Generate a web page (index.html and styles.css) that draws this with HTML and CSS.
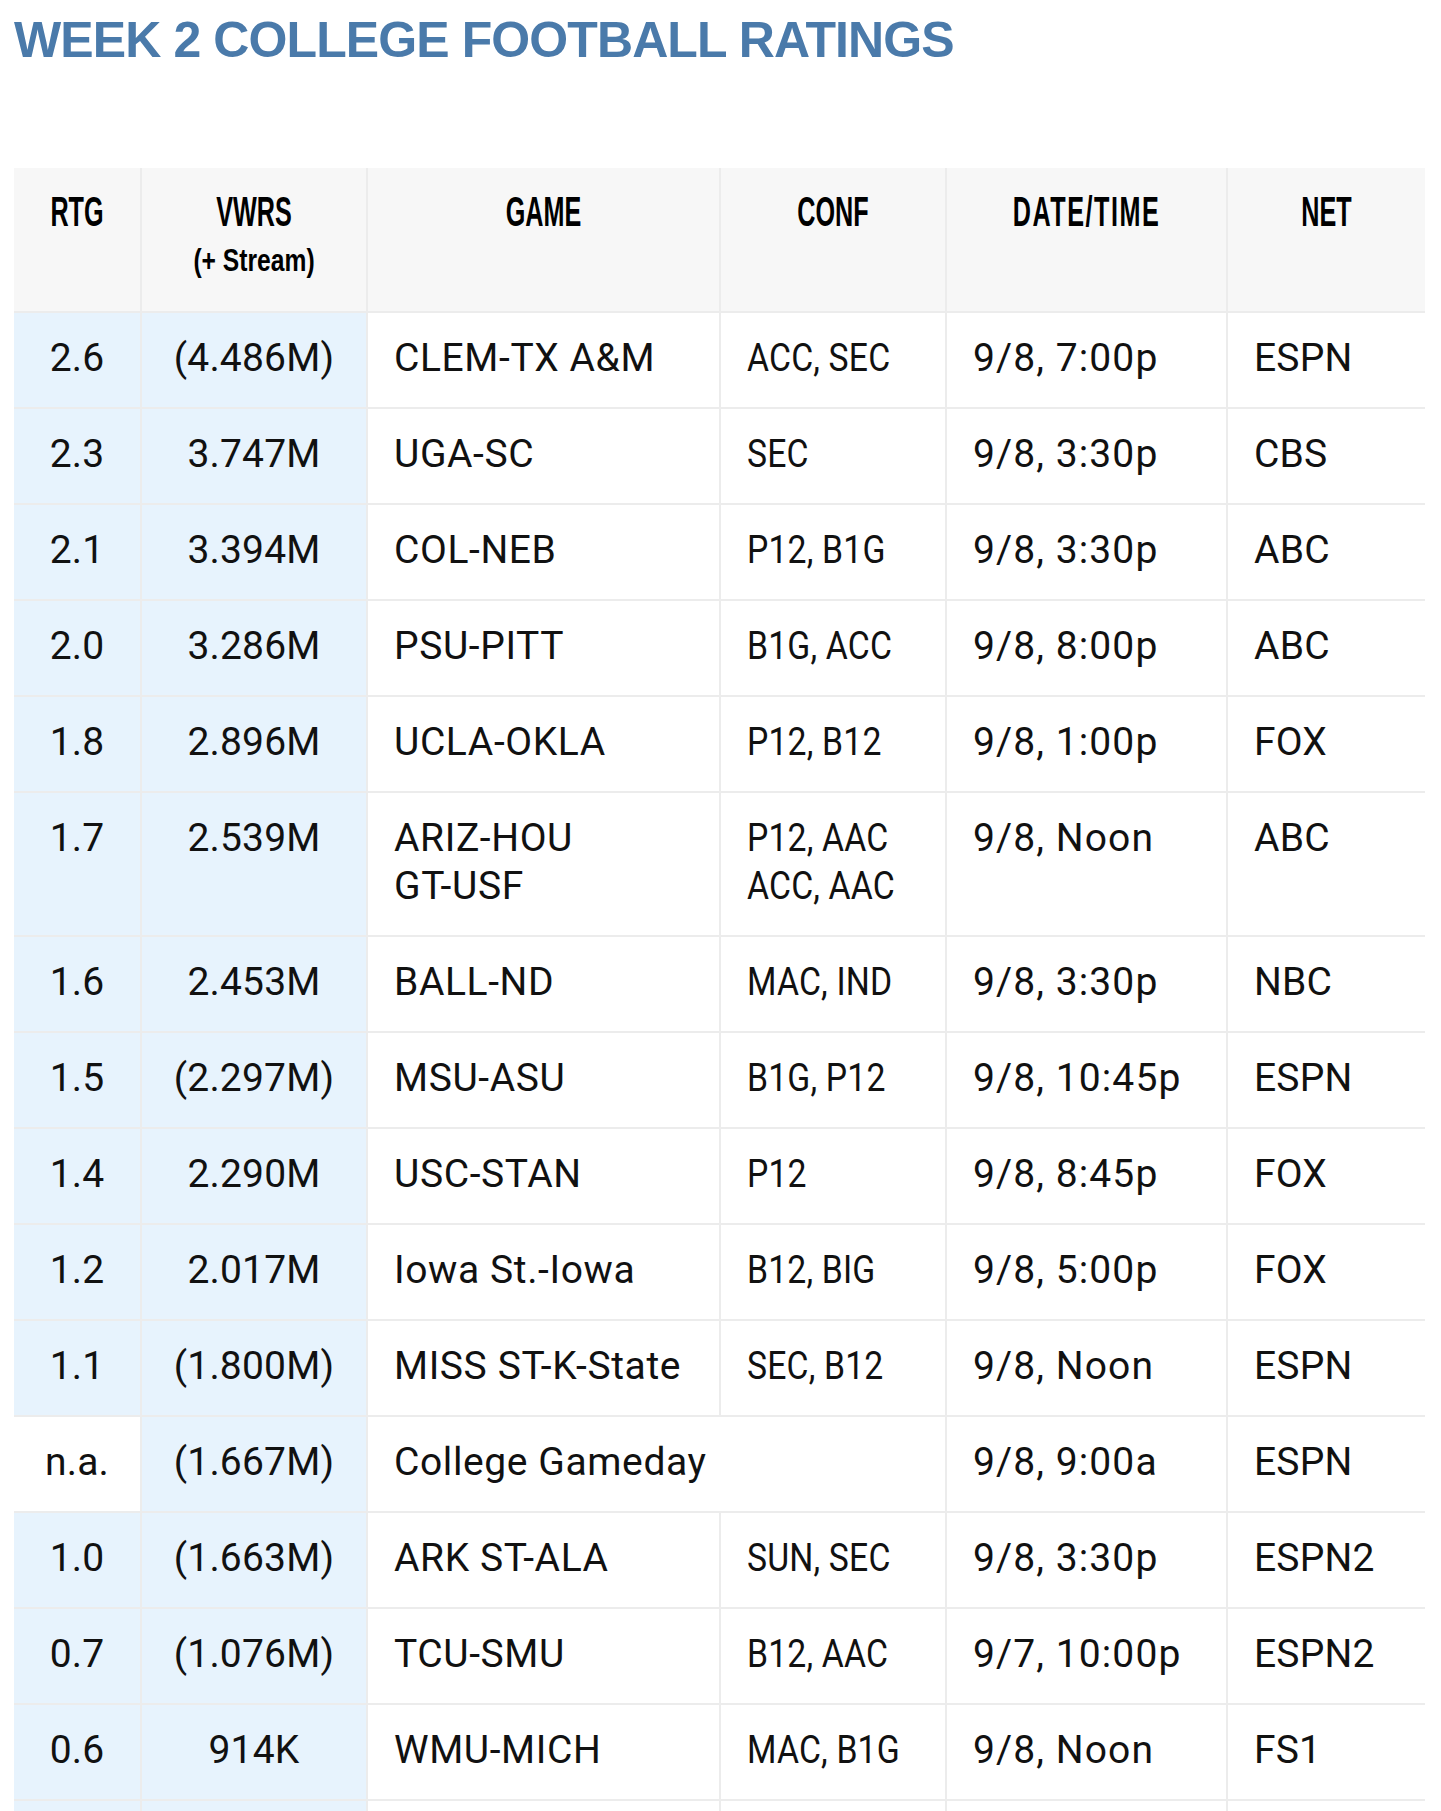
FILE: index.html
```html
<!DOCTYPE html>
<html lang="en">
<head>
<meta charset="utf-8">
<title>Week 2 College Football Ratings</title>
<link rel="stylesheet" href="styles.css">
</head>
<body>
<div class="page">
  <h1 class="title">WEEK 2 COLLEGE FOOTBALL RATINGS</h1>
  <table class="ratings">
    <colgroup>
      <col class="c-rtg"><col class="c-vwrs"><col class="c-game"><col class="c-conf"><col class="c-date"><col class="c-net">
    </colgroup>
    <thead>
      <tr>
        <th><span class="hd">RTG</span></th>
        <th><span class="hd">VWRS</span><span class="hd-sub">(+ Stream)</span></th>
        <th><span class="hd">GAME</span></th>
        <th><span class="hd">CONF</span></th>
        <th><span class="hd hd-wide">DATE/TIME</span></th>
        <th><span class="hd">NET</span></th>
      </tr>
    </thead>
    <tbody>
      <tr><td class="hl ctr">2.6</td><td class="hl ctr">(4.486M)</td><td class="game">CLEM-TX A&amp;M</td><td><span class="cond">ACC, SEC</span></td><td class="date">9/8, 7:00p</td><td>ESPN</td></tr>
      <tr><td class="hl ctr">2.3</td><td class="hl ctr">3.747M</td><td class="game">UGA-SC</td><td><span class="cond">SEC</span></td><td class="date">9/8, 3:30p</td><td>CBS</td></tr>
      <tr><td class="hl ctr">2.1</td><td class="hl ctr">3.394M</td><td class="game">COL-NEB</td><td><span class="cond">P12, B1G</span></td><td class="date">9/8, 3:30p</td><td>ABC</td></tr>
      <tr><td class="hl ctr">2.0</td><td class="hl ctr">3.286M</td><td class="game">PSU-PITT</td><td><span class="cond">B1G, ACC</span></td><td class="date">9/8, 8:00p</td><td>ABC</td></tr>
      <tr><td class="hl ctr">1.8</td><td class="hl ctr">2.896M</td><td class="game">UCLA-OKLA</td><td><span class="cond">P12, B12</span></td><td class="date">9/8, 1:00p</td><td>FOX</td></tr>
      <tr><td class="hl ctr">1.7</td><td class="hl ctr">2.539M</td><td class="game">ARIZ-HOU<br>GT-USF</td><td><span class="cond">P12, AAC<br>ACC, AAC</span></td><td class="date">9/8, Noon</td><td>ABC</td></tr>
      <tr><td class="hl ctr">1.6</td><td class="hl ctr">2.453M</td><td class="game">BALL-ND</td><td><span class="cond">MAC, IND</span></td><td class="date">9/8, 3:30p</td><td>NBC</td></tr>
      <tr><td class="hl ctr">1.5</td><td class="hl ctr">(2.297M)</td><td class="game">MSU-ASU</td><td><span class="cond">B1G, P12</span></td><td class="date">9/8, 10:45p</td><td>ESPN</td></tr>
      <tr><td class="hl ctr">1.4</td><td class="hl ctr">2.290M</td><td class="game">USC-STAN</td><td><span class="cond">P12</span></td><td class="date">9/8, 8:45p</td><td>FOX</td></tr>
      <tr><td class="hl ctr">1.2</td><td class="hl ctr">2.017M</td><td class="game">Iowa St.-Iowa</td><td><span class="cond">B12, BIG</span></td><td class="date">9/8, 5:00p</td><td>FOX</td></tr>
      <tr><td class="hl ctr">1.1</td><td class="hl ctr">(1.800M)</td><td class="game">MISS ST-K-State</td><td><span class="cond">SEC, B12</span></td><td class="date">9/8, Noon</td><td>ESPN</td></tr>
      <tr><td class="ctr">n.a.</td><td class="hl ctr">(1.667M)</td><td class="game" colspan="2">College Gameday</td><td class="date">9/8, 9:00a</td><td>ESPN</td></tr>
      <tr><td class="hl ctr">1.0</td><td class="hl ctr">(1.663M)</td><td class="game">ARK ST-ALA</td><td><span class="cond">SUN, SEC</span></td><td class="date">9/8, 3:30p</td><td>ESPN2</td></tr>
      <tr><td class="hl ctr">0.7</td><td class="hl ctr">(1.076M)</td><td class="game">TCU-SMU</td><td><span class="cond">B12, AAC</span></td><td class="date">9/7, 10:00p</td><td>ESPN2</td></tr>
      <tr><td class="hl ctr">0.6</td><td class="hl ctr">914K</td><td class="game">WMU-MICH</td><td><span class="cond">MAC, B1G</span></td><td class="date">9/8, Noon</td><td>FS1</td></tr>
      <tr><td class="hl ctr">&nbsp;</td><td class="hl ctr">&nbsp;</td><td class="game">&nbsp;</td><td>&nbsp;</td><td class="date">&nbsp;</td><td>&nbsp;</td></tr>
    </tbody>
  </table>
</div>
</body>
</html>
```

FILE: styles.css
```css
html, body {
  margin: 0;
  padding: 0;
  background: #ffffff;
}

.page {
  padding: 10px 0 0 14px;
  width: 1411px;
}

.title {
  margin: 0;
  font-family: "Liberation Sans", Arial, sans-serif;
  font-weight: 700;
  font-size: 50px;
  line-height: 60px;
  letter-spacing: -0.9px;
  color: #4a7aaa;
}

.ratings {
  margin-top: 98px;
  width: 1411px;
  table-layout: fixed;
  border-collapse: separate;
  border-spacing: 0;
}

.c-rtg { width: 126px; }
.c-vwrs { width: 226px; }
.c-game { width: 353px; }
.c-conf { width: 226px; }
.c-date { width: 281px; }
.c-net { width: 199px; }

.ratings th {
  background: #f7f7f7;
  padding: 20px 6px 27px;
  text-align: center;
  vertical-align: top;
  font-family: "Liberation Sans", Arial, sans-serif;
  font-weight: 700;
  color: #000;
  overflow: hidden;
}

.ratings th + th {
  border-left: 2px solid #ececec;
}

.hd {
  display: block;
  font-size: 42px;
  line-height: 48px;
  transform: scaleX(0.6);
  white-space: nowrap;
}

.hd-wide {
  letter-spacing: 2.5px;
}

.hd-sub {
  display: block;
  font-size: 32px;
  line-height: 48px;
  transform: scaleX(0.77);
  white-space: nowrap;
}

.ratings td {
  border-top: 2px solid #ececec;
  padding: 21px 10px 25px 26px;
  vertical-align: top;
  text-align: left;
  font-family: Roboto, "Liberation Sans", sans-serif;
  font-size: 39px;
  line-height: 48px;
  letter-spacing: 0.2px;
  color: #111;
  white-space: nowrap;
}

.ratings td + td {
  border-left: 2px solid #ececec;
}

.ratings td.ctr {
  text-align: center;
  padding-left: 4px;
  padding-right: 4px;
}

.ratings td.hl {
  background: #e7f3fd;
}

.ratings td.game {
  letter-spacing: 0.6px;
}

.ratings td.date {
  letter-spacing: 1.1px;
}

.cond {
  display: inline-block;
  transform: scaleX(0.865);
  transform-origin: left center;
}
```
